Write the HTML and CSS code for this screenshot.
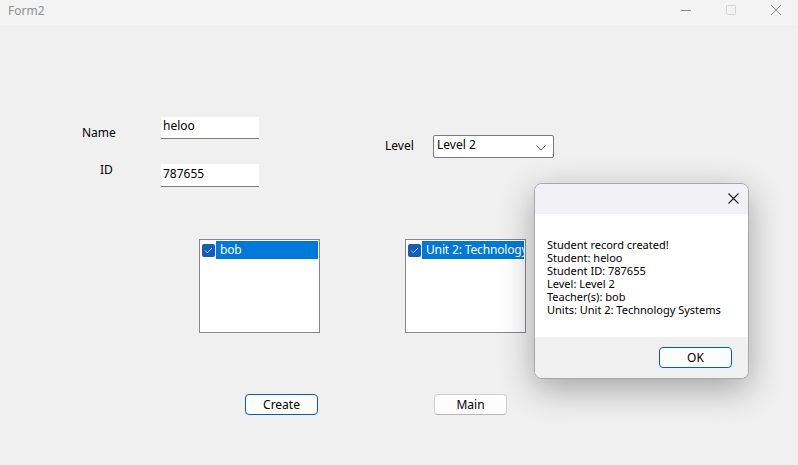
FILE: index.html
```html
<!DOCTYPE html>
<html>
<head>
<meta charset="utf-8">
<title>Form2</title>
<link rel="stylesheet" href="styles.css">
</head>
<body>
<div class="window">
  <div class="titlebar">
    <span class="title">Form2</span>
    <div class="caption">
      <span class="cap-btn"><svg width="12" height="12" viewBox="0 0 12 12"><path d="M1 6.5H11" stroke="#8d8d8d" stroke-width="1"/></svg></span>
      <span class="cap-btn"><svg width="12" height="12" viewBox="0 0 12 12"><rect x="1.5" y="1.5" width="9" height="9" rx="1" fill="none" stroke="#d4d4d4" stroke-width="1"/></svg></span>
      <span class="cap-btn"><svg width="12" height="12" viewBox="0 0 12 12"><path d="M1 1L11 11M11 1L1 11" stroke="#8d8d8d" stroke-width="1"/></svg></span>
    </div>
  </div>
  <div class="client">
    <span class="label lbl-name">Name</span>
    <div class="textbox tb-name">heloo</div>
    <span class="label lbl-id">ID</span>
    <div class="textbox tb-id">787655</div>
    <span class="label lbl-level">Level</span>
    <div class="combo">
      <span>Level 2</span>
      <svg class="chev" width="10" height="6" viewBox="0 0 10 6"><path d="M0.5 0.5L5 5L9.5 0.5" fill="none" stroke="#5c5c5c" stroke-width="1"/></svg>
    </div>
    <div class="listbox lb-teachers">
      <div class="item">
        <span class="check"><svg width="9" height="7" viewBox="0 0 9 7"><path d="M1 3.5L3.3 5.8L8 1" fill="none" stroke="#b9d4ee" stroke-width="1"/></svg></span>
        <span class="item-text">bob</span>
      </div>
    </div>
    <div class="listbox lb-units">
      <div class="item">
        <span class="check"><svg width="9" height="7" viewBox="0 0 9 7"><path d="M1 3.5L3.3 5.8L8 1" fill="none" stroke="#b9d4ee" stroke-width="1"/></svg></span>
        <span class="item-text">Unit 2: Technology Systems</span>
      </div>
    </div>
    <button class="btn btn-default btn-create">Create</button>
    <button class="btn btn-main">Main</button>

    <div class="dialog">
      <div class="dlg-head">
        <svg class="dlg-close" width="11" height="11" viewBox="0 0 11 11"><path d="M0.5 0.5L10.5 10.5M10.5 0.5L0.5 10.5" stroke="#1a1a1a" stroke-width="1.1"/></svg>
      </div>
      <div class="dlg-body">
        <div class="dlg-line">Student record created!</div>
        <div class="dlg-line">Student: heloo</div>
        <div class="dlg-line">Student ID: 787655</div>
        <div class="dlg-line">Level: Level 2</div>
        <div class="dlg-line">Teacher(s): bob</div>
        <div class="dlg-line">Units: Unit 2: Technology Systems</div>
      </div>
      <div class="dlg-foot">
        <button class="btn btn-default btn-ok">OK</button>
      </div>
    </div>
  </div>
</div>
</body>
</html>
```

FILE: styles.css
```css
* { box-sizing: border-box; }
html, body {
  margin: 0;
  padding: 0;
  width: 798px;
  height: 465px;
  overflow: hidden;
  background: #f0f0f0;
  font-family: "Noto Sans", "Open Sans", sans-serif;
  font-size: 12px;
  line-height: 16px;
  color: #000;
}
.window {
  display: flex;
  flex-direction: column;
  width: 798px;
  height: 465px;
}
.titlebar {
  height: 25px;
  flex: none;
  background: #f3f3f3;
  display: flex;
  align-items: flex-start;
  justify-content: space-between;
}
.title {
  color: #8f8f8f;
  margin: 3px 0 0 8px;
  font-size: 12px;
}
.caption {
  display: flex;
  align-items: flex-start;
  gap: 33px;
  margin: 4px 16px 0 0;
}
.cap-btn { display: block; width: 12px; height: 12px; }
.cap-btn svg { display: block; }
.client {
  position: relative;
  flex: 1;
  background: #f0f0f0;
}
.label {
  position: absolute;
  white-space: nowrap;
}
.lbl-name { left: 82px; top: 100px; }
.lbl-id { left: 100px; top: 137px; }
.lbl-level { left: 385px; top: 113px; }
.textbox {
  position: absolute;
  left: 161px;
  width: 98px;
  height: 22px;
  background: #fff;
  border-bottom: 1px solid #7f7f7f;
  padding: 1px 2px;
}
.tb-name { top: 92px; }
.tb-id { top: 139px; height: 23px; padding-top: 2px; }
.combo {
  position: absolute;
  left: 433px;
  top: 110px;
  width: 121px;
  height: 23px;
  background: #fff;
  border: 1px solid #7a7a7a;
  border-radius: 2px;
  padding: 1px 3px;
  display: flex;
  justify-content: space-between;
  align-items: flex-start;
}
.chev { margin: 8px 4px 0 0; }
.listbox {
  position: absolute;
  top: 214px;
  width: 121px;
  height: 94px;
  background: #fff;
  border: 1px solid #828790;
  padding: 1px 1px 0 2px;
  overflow: hidden;
}
.lb-teachers { left: 199px; }
.lb-units { left: 405px; }
.item {
  display: flex;
  align-items: center;
  height: 18px;
  gap: 1px;
}
.check {
  width: 13px;
  height: 13px;
  flex: none;
  background: #1160b8;
  border-radius: 2px;
  display: flex;
  align-items: center;
  justify-content: center;
}
.check svg { display: block; }
.item-text {
  flex: 1;
  height: 18px;
  background: #0078d7;
  color: #fff;
  padding: 1px 0 0 4px;
  white-space: nowrap;
  overflow: hidden;
  letter-spacing: -0.15px;
}
.btn {
  font-family: inherit;
  font-size: 12px;
  line-height: 16px;
  color: #000;
  width: 73px;
  height: 21px;
  padding: 0;
  background: #fdfdfd;
  border: 1px solid #d0d0d0;
  border-bottom-color: #b8b8b8;
  border-radius: 4px;
  display: flex;
  align-items: center;
  justify-content: center;
}
.btn-default {
  border: 1px solid #005fb8;
}
.btn-create { position: absolute; left: 245px; top: 369px; }
.btn-main { position: absolute; left: 434px; top: 369px; }
.dialog {
  position: absolute;
  left: 534px;
  top: 158px;
  width: 215px;
  height: 196px;
  border: 1px solid #a8a8a8;
  border-radius: 8px;
  background: #fff;
  box-shadow: 0 10px 34px rgba(0, 0, 0, 0.32);
  display: flex;
  flex-direction: column;
  overflow: hidden;
}
.dlg-head {
  height: 30px;
  flex: none;
  background: #f2f2f6;
  display: flex;
  justify-content: flex-end;
  align-items: flex-start;
}
.dlg-close { margin: 9px 9px 0 0; display: block; }
.dlg-body {
  flex: 1;
  background: #fff;
  padding: 24px 0 0 12px;
  font-size: 11px;
  white-space: nowrap;
}
.dlg-line {
  height: 13px;
  line-height: 13px;
}
.dlg-foot {
  height: 41px;
  flex: none;
  background: #f0f0f0;
  display: flex;
  justify-content: flex-end;
  align-items: flex-start;
  padding: 10px 16px 0 0;
}
```
